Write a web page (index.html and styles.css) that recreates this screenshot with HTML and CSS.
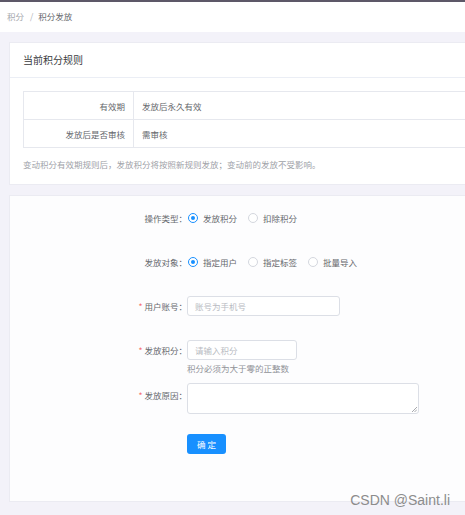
FILE: index.html
```html
<!DOCTYPE html>
<html lang="zh-CN">
<head>
<meta charset="utf-8">
<title>积分发放</title>
<link rel="stylesheet" href="styles.css">
</head>
<body>
<div class="topline"></div>
<header class="header">
  <span class="crumb">积分</span>
  <span class="sep">/</span>
  <span class="crumb current">积分发放</span>
</header>
<main class="main">
  <section class="card">
    <div class="card-head">当前积分规则</div>
    <div class="card-body">
      <table class="rules">
        <tr>
          <td class="rule-label">有效期</td>
          <td class="rule-value">发放后永久有效</td>
        </tr>
        <tr>
          <td class="rule-label">发放后是否审核</td>
          <td class="rule-value">需审核</td>
        </tr>
      </table>
      <p class="note">变动积分有效期规则后，发放积分将按照新规则发放；变动前的发放不受影响。</p>
    </div>
  </section>

  <section class="card form-card">
    <div class="form">
      <div class="row">
        <div class="label">操作类型：</div>
        <div class="control radios">
          <span class="radio-item"><span class="radio on"></span>发放积分</span>
          <span class="radio-item"><span class="radio"></span>扣除积分</span>
        </div>
      </div>
      <div class="row">
        <div class="label">发放对象：</div>
        <div class="control radios">
          <span class="radio-item"><span class="radio on"></span>指定用户</span>
          <span class="radio-item"><span class="radio"></span>指定标签</span>
          <span class="radio-item"><span class="radio"></span>批量导入</span>
        </div>
      </div>
      <div class="row">
        <div class="label"><span class="req">*</span>用户账号：</div>
        <div class="control">
          <div class="input w-account"><span class="ph">账号为手机号</span></div>
        </div>
      </div>
      <div class="row row-help">
        <div class="label"><span class="req">*</span>发放积分：</div>
        <div class="control">
          <div class="input w-points"><span class="ph">请输入积分</span></div>
          <div class="help">积分必须为大于零的正整数</div>
        </div>
      </div>
      <div class="row row-text">
        <div class="label label-text"><span class="req">*</span>发放原因：</div>
        <div class="control">
          <div class="textarea">
            <svg class="grip" width="5" height="5" viewBox="0 0 5 5"><path d="M5 0 L0 5 M5 2.5 L2.5 5" stroke="#909399" stroke-width="0.8"/></svg>
          </div>
        </div>
      </div>
      <div class="row">
        <div class="label"></div>
        <div class="control">
          <button class="btn" type="button">确 定</button>
        </div>
      </div>
    </div>
  </section>
</main>
<div class="watermark">CSDN @Saint.li</div>
</body>
</html>
```

FILE: styles.css
```css
* { box-sizing: border-box; }
html, body {
  margin: 0;
  padding: 0;
}
body {
  width: 465px;
  height: 515px;
  overflow: hidden;
  position: relative;
  background: #f3f2f9;
  font-family: "Noto Sans CJK SC", "Noto Sans", sans-serif;
  font-size: 8.5px;
  color: #606266;
}
.topline {
  height: 2px;
  background: #5d5868;
}
.header {
  height: 30px;
  background: #fff;
  padding-left: 7px;
  padding-bottom: 2px;
  display: flex;
  align-items: center;
  white-space: nowrap;
}
.crumb { color: #a3a6ab; }
.crumb.current { color: #66686d; }
.sep {
  color: #b0b3b8;
  margin: 0 5px 0 6px;
}
.main {
  padding: 10px 0 0 9px;
}
.card {
  width: 480px;
  background: #fff;
  border: 1px solid #ebebf2;
}
.card-head {
  height: 35px;
  line-height: 34px;
  padding-left: 13px;
  font-size: 10px;
  color: #3a3b3e;
  border-bottom: 1px solid #ebeef5;
}
.card-body {
  padding: 13px;
}
.rules {
  width: 100%;
  border-collapse: collapse;
  border: 1px solid #e6e8ee;
}
.rules td {
  height: 28px;
  border: 1px solid #e6e8ee;
  padding: 0;
  color: #66686d;
}
.rule-label {
  width: 110px;
  text-align: right;
  padding-right: 8px !important;
}
.rule-value {
  padding-left: 8px !important;
}
.note {
  margin: 9px 0 0;
  line-height: 14px;
  color: #a0a2a8;
}
.form-card {
  margin-top: 10px;
  height: 307px;
}
.form {
  padding-top: 12px;
  background: #fdfdfe;
  height: 100%;
}
.row {
  display: flex;
  align-items: flex-start;
  margin-bottom: 24px;
}
.row-help { margin-bottom: 9px; }
.row-text { margin-bottom: 20px; }
.label {
  width: 177px;
  flex: none;
  text-align: right;
  line-height: 20px;
  color: #66686d;
  white-space: nowrap;
}
.label-text { padding-top: 2px; }
.req {
  color: #f56c6c;
  margin-right: 2px;
}
.control {
  flex: none;
}
.radios {
  display: flex;
  align-items: center;
  height: 20px;
}
.radio-item {
  display: flex;
  align-items: center;
  margin-right: 10px;
  color: #66686d;
  white-space: nowrap;
}
.radio {
  width: 10px;
  height: 10px;
  border: 1px solid #d4d7de;
  border-radius: 50%;
  margin: 0 5px 0 1px;
  position: relative;
  background: #fff;
}
.radio.on {
  border-color: #1890ff;
}
.radio.on::after {
  content: "";
  position: absolute;
  left: 2px;
  top: 2px;
  width: 4px;
  height: 4px;
  border-radius: 50%;
  background: #1890ff;
}
.input {
  height: 20px;
  border: 1px solid #dcdfe6;
  border-radius: 3px;
  background: #fff;
  padding-left: 7px;
  line-height: 18px;
}
.w-account { width: 153px; }
.w-points { width: 110px; }
.ph { color: #b8bbc2; }
.help {
  margin-top: 2px;
  line-height: 12px;
  color: #909298;
}
.textarea {
  width: 232px;
  height: 31px;
  border: 1px solid #dcdfe6;
  border-radius: 3px;
  background: #fff;
  position: relative;
}
.grip {
  position: absolute;
  right: 1px;
  bottom: 1px;
}
.btn {
  width: 39px;
  height: 20px;
  border: none;
  border-radius: 3px;
  background: #1890ff;
  color: #fff;
  font-family: inherit;
  font-size: 8.5px;
  padding: 0;
  line-height: 20px;
}
.watermark {
  position: absolute;
  right: 15px;
  bottom: 7px;
  font-family: "Liberation Sans", Arial, sans-serif;
  font-size: 14px;
  line-height: 16px;
  color: #8c8c8c;
}
```
